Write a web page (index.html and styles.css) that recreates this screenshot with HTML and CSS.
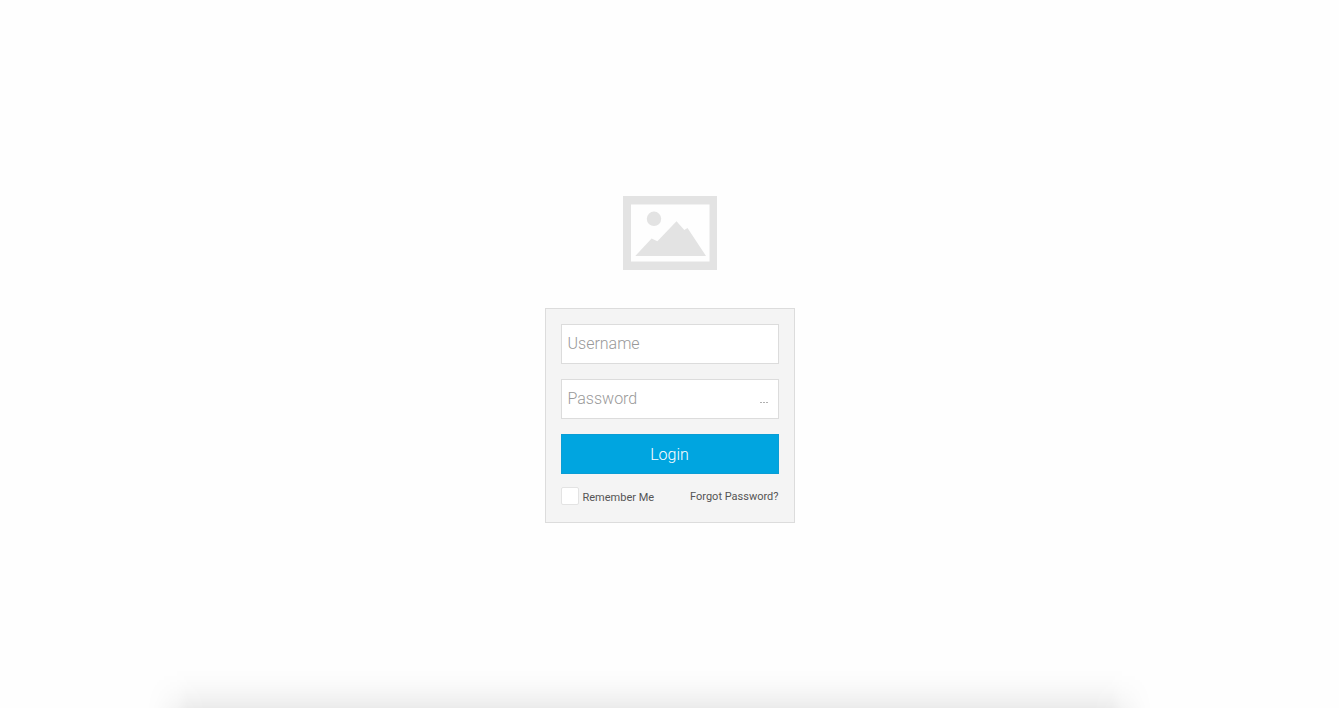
FILE: index.html
```html
<!DOCTYPE html>
<html lang="en">
<head>
<meta charset="utf-8">
<meta name="viewport" content="width=device-width, initial-scale=1">
<title>Login</title>
<link rel="stylesheet" href="styles.css">
</head>
<body class="page">
<main class="login">
  <svg class="logo" viewBox="0 0 94 74" role="img" aria-label="Logo">
    <path fill-rule="evenodd" d="M0 0H94V74H0ZM8 8.500V65.500H86.500V8.500Z"/>
    <circle cx="31" cy="22.800" r="7.200"/>
    <path d="M12.300 60 28.600 42.600 34.400 45.200 53.500 25.200 61.300 34 64.500 32 83 60Z"/>
  </svg>
  <form class="card">
    <input class="field" type="text" placeholder="Username" aria-label="Username" autocomplete="off">
    <div class="password">
      <input class="field" type="password" placeholder="Password" aria-label="Password" autocomplete="off">
      <button class="reveal" type="button" aria-label="Show password"><svg class="dots" viewBox="0 0 8 1" aria-hidden="true"><path d="M0 0h2v1H0zM3 0h2v1H3zM6 0h2v1H6z"/></svg></button>
    </div>
    <button class="submit" type="submit">Login</button>
    <div class="options">
      <label class="remember" for="remember"><input class="check" id="remember" type="checkbox"><span class="caption">Remember Me</span></label>
      <a class="forgot" href="#">Forgot Password?</a>
    </div>
  </form>
</main>
<div class="shade" aria-hidden="true"></div>
</body>
</html>
```
FILE: styles.css
```css
* { box-sizing: border-box; }

.page {
  position: relative;
  min-height: 100vh;
  margin: 0;
  background: #fefefe;
  font-family: Roboto, "Open Sans", sans-serif;
}

.login {
  display: flex;
  flex-direction: column;
  align-items: center;
  justify-content: center;
  gap: 38px;
  min-height: 100vh;
  padding-top: 11px;
}

.logo {
  width: 94px;
  fill: #e3e3e3;
}

.card {
  display: flex;
  flex-direction: column;
  gap: 15px;
  width: 250px;
  max-width: 100%;
  padding: 15px;
  border: 1px solid #dcdcdc;
  background: #f4f4f4;
}

.field {
  display: block;
  width: 100%;
  height: 40px;
  padding: 0 6px 2px;
  border: 1px solid #dcdcdc;
  border-radius: 0;
  background: #fff;
  color: #555;
  font: 300 16px/20px Roboto, "Open Sans", sans-serif;
}

.field::placeholder {
  color: #999;
  opacity: 1;
}

.password { position: relative; }

.reveal {
  position: absolute;
  top: 1px;
  right: 1px;
  display: flex;
  align-items: center;
  width: 28px;
  height: 38px;
  padding: 7px 9px 0 10px;
  border: 0;
  background: transparent;
}

.dots {
  width: 8px;
  height: 1px;
  fill: #b0b0b0;
}

.submit {
  height: 40px;
  padding: 2px 0 0;
  border: 1px solid #0a9dd5;
  background: #00a5e0;
  color: #fff;
  font: 300 16px/20px Roboto, "Open Sans", sans-serif;
}

.options {
  display: flex;
  align-items: center;
  justify-content: space-between;
  margin: -2px 0 2px;
  color: #555;
  font-size: 11px;
  line-height: 14px;
}

.remember {
  display: flex;
  align-items: center;
  gap: 4px;
}

.caption { padding-top: 4px; }

.check {
  appearance: none;
  width: 18px;
  height: 18px;
  margin: 0;
  border: 1px solid #e3e3e3;
  border-radius: 2px;
  background: #fff;
}

.check:checked { background: #00a5e0; }

.forgot {
  padding-top: 2px;
  color: inherit;
  text-decoration: none;
}

.shade {
  position: absolute;
  bottom: 0;
  left: 11%;
  right: 14%;
  height: 40px;
  pointer-events: none;
  background: linear-gradient(to top, rgba(0, 0, 0, 0.075), rgba(0, 0, 0, 0.052) 20%, rgba(0, 0, 0, 0.028) 45%, rgba(0, 0, 0, 0.008) 72%, transparent);
  mask-image: linear-gradient(to right, transparent, rgba(0, 0, 0, 0.12) 1%, rgba(0, 0, 0, 0.5) 3%, rgba(0, 0, 0, 0.88) 4%, black 6%, black 94%, rgba(0, 0, 0, 0.88) 96%, rgba(0, 0, 0, 0.5) 97%, rgba(0, 0, 0, 0.12) 99%, transparent);
}
```
